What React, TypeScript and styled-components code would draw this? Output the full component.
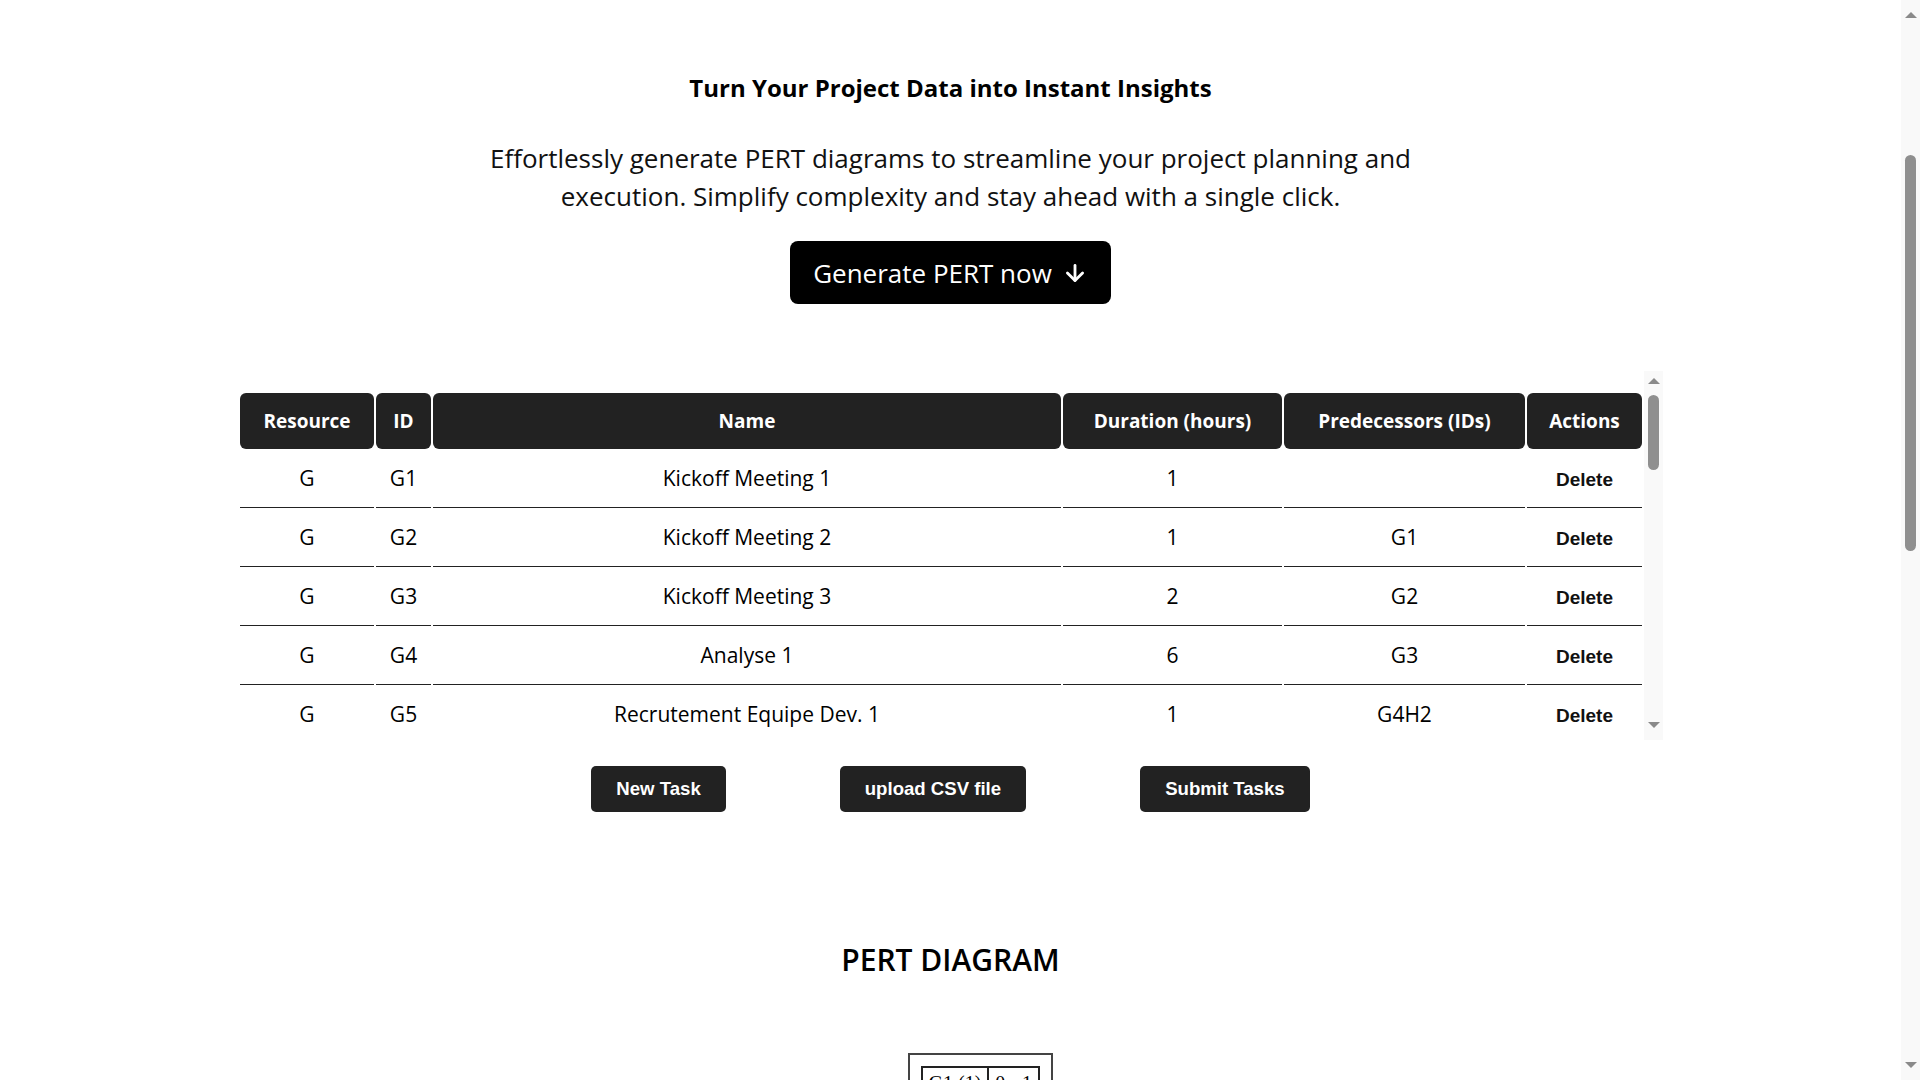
import React from "react";
import styled, { createGlobalStyle } from "styled-components";
import { ArrowDown } from "lucide-react";

const GlobalStyle = createGlobalStyle`
  html, body {
    margin: 0;
    padding: 0;
    background: #ffffff;
  }
  body {
    font-family: "Open Sans", "Noto Sans", sans-serif;
    color: #000;
  }
  * { box-sizing: border-box; }
`;

const Shell = styled.div`
  display: flex;
  align-items: flex-start;
`;

const Page = styled.div`
  flex: 1;
  display: flex;
  flex-direction: column;
  align-items: center;
  padding-top: 72px;
  padding-bottom: 150px;
`;

/* scrollbar look-alike rails */
const Rail = styled.div<{ $height: string; $sticky?: boolean }>`
  width: 19px;
  flex: 0 0 19px;
  height: ${(p) => p.$height};
  background: #f9f9f9;
  display: flex;
  flex-direction: column;
  align-items: center;
  padding: ${(p) => (p.$sticky ? "12px 0" : "7px 0 12px")};
  position: ${(p) => (p.$sticky ? "sticky" : "static")};
  top: 0;
`;

const RailArrow = styled.div<{ $dir: "up" | "down" }>`
  width: 0;
  height: 0;
  border-left: 6px solid transparent;
  border-right: 6px solid transparent;
  ${(p) =>
    p.$dir === "up"
      ? "border-bottom: 6px solid #8a8a8a;"
      : "border-top: 6px solid #8a8a8a; margin-top: auto;"}
`;

const RailThumb = styled.div<{ $offset: number; $size: number }>`
  width: 11px;
  margin-top: ${(p) => p.$offset}px;
  height: ${(p) => p.$size}px;
  border-radius: 6px;
  background: #8f8f8f;
`;

const Hero = styled.section`
  display: flex;
  flex-direction: column;
  align-items: center;
`;

const Title = styled.h2`
  margin: 0;
  font-size: 24px;
  font-weight: 700;
  line-height: 32px;
  color: #000;
`;

const Lead = styled.p`
  margin: 35px 0 0;
  max-width: 990px;
  text-align: center;
  font-size: 26px;
  line-height: 38px;
  color: #111;
`;

const GenerateButton = styled.button`
  margin-top: 26px;
  height: 63px;
  padding: 0 23px;
  display: flex;
  align-items: center;
  gap: 10px;
  background: #000;
  color: #fff;
  border: none;
  border-radius: 8px;
  font-family: "Open Sans", "Noto Sans", sans-serif;
  font-size: 26px;
  cursor: pointer;
`;

const TableFrame = styled.div`
  margin-top: 67px;
  width: 1425px;
  height: 369px;
  display: flex;
`;

const TableViewport = styled.div`
  flex: 1;
  padding-top: 22px;
  overflow-y: auto;
  scrollbar-width: none;
  &::-webkit-scrollbar { display: none; }
`;

const Table = styled.table`
  width: 1406px;
  table-layout: fixed;
  border-collapse: separate;
  border-spacing: 2px 0;
`;

const HeadCell = styled.th`
  height: 56px;
  padding: 0;
  background: #222;
  color: #fff;
  border-radius: 6px;
  font-size: 19px;
  font-weight: 700;
  text-align: center;
`;

const Cell = styled.td`
  height: 59px;
  padding: 0;
  border-bottom: 1px solid #222;
  font-size: 21px;
  text-align: center;
  color: #000;
`;

const DeleteButton = styled.button`
  background: none;
  border: none;
  padding: 0;
  font-family: "Liberation Sans", Arial, sans-serif;
  font-weight: 700;
  font-size: 19px;
  color: #111;
  cursor: pointer;
`;

const ButtonRow = styled.div`
  margin-top: 26px;
  display: flex;
  justify-content: center;
  gap: 114px;
`;

const ActionButton = styled.button`
  height: 46px;
  padding: 0 25px;
  background: #222;
  color: #fff;
  border: none;
  border-radius: 5px;
  font-family: "Liberation Sans", Arial, sans-serif;
  font-weight: 700;
  font-size: 18.6px;
  cursor: pointer;
`;

const DiagramTitle = styled.h2`
  margin: 127px 0 0;
  font-size: 30px;
  font-weight: 600;
  line-height: 42px;
  color: #000;
`;

const DiagramCanvas = styled.div`
  position: relative;
  margin-top: 72px;
  width: 1100px;
  height: 1650px;
`;

const NodeBox = styled.div`
  position: absolute;
  border: 2px solid #444;
  padding: 11px;
  background: #fff;
`;

const NodeTable = styled.table`
  border-collapse: collapse;
  font-family: "Liberation Serif", "Times New Roman", serif;
  font-size: 20px;
  color: #000;
`;

const NodeCell = styled.td`
  border: 2px solid #222;
  padding: 4px 6px;
  white-space: nowrap;
  text-align: center;
`;

const Edge = styled.div`
  position: absolute;
  width: 2px;
  background: #444;
`;

type Task = { r: string; id: string; name: string; d: number; p: string };

const tasks: Task[] = [
  { r: "G", id: "G1", name: "Kickoff Meeting 1", d: 1, p: "" },
  { r: "G", id: "G2", name: "Kickoff Meeting 2", d: 1, p: "G1" },
  { r: "G", id: "G3", name: "Kickoff Meeting 3", d: 2, p: "G2" },
  { r: "G", id: "G4", name: "Analyse 1", d: 6, p: "G3" },
  { r: "G", id: "G5", name: "Recrutement Equipe Dev. 1", d: 1, p: "G4H2" },
  { r: "G", id: "G6", name: "Recrutement Equipe Dev. 2", d: 2, p: "G5" },
  { r: "G", id: "G7", name: "Conception 1", d: 4, p: "G6" },
  { r: "G", id: "G8", name: "Conception 2", d: 3, p: "G7" },
  { r: "H", id: "H1", name: "Analyse 2", d: 5, p: "G3" },
  { r: "H", id: "H2", name: "Analyse 3", d: 2, p: "H1" },
  { r: "H", id: "H3", name: "Développement 1", d: 8, p: "G8" },
  { r: "H", id: "H4", name: "Développement 2", d: 6, p: "H3" },
  { r: "H", id: "H5", name: "Développement 3", d: 5, p: "H4" },
  { r: "H", id: "H6", name: "Tests 1", d: 3, p: "H5" },
  { r: "H", id: "H7", name: "Tests 2", d: 2, p: "H6" },
  { r: "H", id: "H8", name: "Tests 3", d: 2, p: "H7" },
  { r: "I", id: "I1", name: "Intégration 1", d: 4, p: "H8" },
  { r: "I", id: "I2", name: "Intégration 2", d: 3, p: "I1" },
  { r: "I", id: "I3", name: "Recette 1", d: 5, p: "I2" },
  { r: "I", id: "I4", name: "Recette 2", d: 3, p: "I3" },
  { r: "I", id: "I5", name: "Documentation", d: 4, p: "I4" },
  { r: "I", id: "I6", name: "Formation", d: 2, p: "I5" },
  { r: "J", id: "J1", name: "Déploiement 1", d: 1, p: "I6" },
  { r: "J", id: "J2", name: "Déploiement 2", d: 1, p: "J1" },
  { r: "J", id: "J3", name: "Support", d: 3, p: "J2" },
  { r: "J", id: "J4", name: "Bilan", d: 1, p: "J3" },
];

const columns: { label: string; width: number }[] = [
  { label: "Resource", width: 134 },
  { label: "ID", width: 55 },
  { label: "Name", width: 628 },
  { label: "Duration (hours)", width: 219 },
  { label: "Predecessors (IDs)", width: 241 },
  { label: "Actions", width: 115 },
];

const nodes = [
  { id: "G1", d: 1, es: 0, ef: 1, x: 507, y: 0 },
  { id: "G2", d: 1, es: 1, ef: 2, x: 507, y: 200 },
  { id: "G3", d: 2, es: 2, ef: 4, x: 507, y: 400 },
  { id: "G4", d: 6, es: 4, ef: 10, x: 367, y: 600 },
  { id: "H1", d: 5, es: 4, ef: 9, x: 647, y: 600 },
  { id: "H2", d: 2, es: 9, ef: 11, x: 647, y: 800 },
  { id: "G5", d: 1, es: 11, ef: 12, x: 507, y: 1000 },
];

export default function App() {
  return (
    <>
      <GlobalStyle />
      <Shell>
        <Page>
          <Hero>
            <Title>Turn Your Project Data into Instant Insights</Title>
            <Lead>
              Effortlessly generate PERT diagrams to streamline your project planning and
              execution. Simplify complexity and stay ahead with a single click.
            </Lead>
            <GenerateButton>
              Generate PERT now
              <ArrowDown size={26} strokeWidth={2.6} />
            </GenerateButton>
          </Hero>

          <TableFrame>
            <TableViewport>
              <Table>
                <colgroup>
                  {columns.map((c) => (
                    <col key={c.label} style={{ width: c.width }} />
                  ))}
                </colgroup>
                <thead>
                  <tr>
                    {columns.map((c) => (
                      <HeadCell key={c.label}>{c.label}</HeadCell>
                    ))}
                  </tr>
                </thead>
                <tbody>
                  {tasks.map((t) => (
                    <tr key={t.id}>
                      <Cell>{t.r}</Cell>
                      <Cell>{t.id}</Cell>
                      <Cell>{t.name}</Cell>
                      <Cell>{t.d}</Cell>
                      <Cell>{t.p}</Cell>
                      <Cell>
                        <DeleteButton>Delete</DeleteButton>
                      </Cell>
                    </tr>
                  ))}
                </tbody>
              </Table>
            </TableViewport>
            <Rail $height="100%">
              <RailArrow $dir="up" />
              <RailThumb $offset={11} $size={75} />
              <RailArrow $dir="down" />
            </Rail>
          </TableFrame>

          <ButtonRow>
            <ActionButton>New Task</ActionButton>
            <ActionButton>upload CSV file</ActionButton>
            <ActionButton>Submit Tasks</ActionButton>
          </ButtonRow>

          <DiagramTitle>PERT DIAGRAM</DiagramTitle>

          <DiagramCanvas>
            {nodes.map((n) => (
              <NodeBox key={n.id} style={{ left: n.x, top: n.y }}>
                <NodeTable>
                  <tbody>
                    <tr>
                      <NodeCell>
                        {n.id} ({n.d})
                      </NodeCell>
                      <NodeCell>
                        {n.es} - {n.ef}
                      </NodeCell>
                    </tr>
                  </tbody>
                </NodeTable>
              </NodeBox>
            ))}
            <Edge style={{ left: 578, top: 70, height: 130 }} />
            <Edge style={{ left: 578, top: 270, height: 130 }} />
            <Edge style={{ left: 578, top: 470, height: 130 }} />
            <Edge style={{ left: 718, top: 670, height: 130 }} />
          </DiagramCanvas>
        </Page>
        <Rail $height="100vh" $sticky>
          <RailArrow $dir="up" />
          <RailThumb $offset={137} $size={396} />
          <RailArrow $dir="down" />
        </Rail>
      </Shell>
    </>
  );
}
